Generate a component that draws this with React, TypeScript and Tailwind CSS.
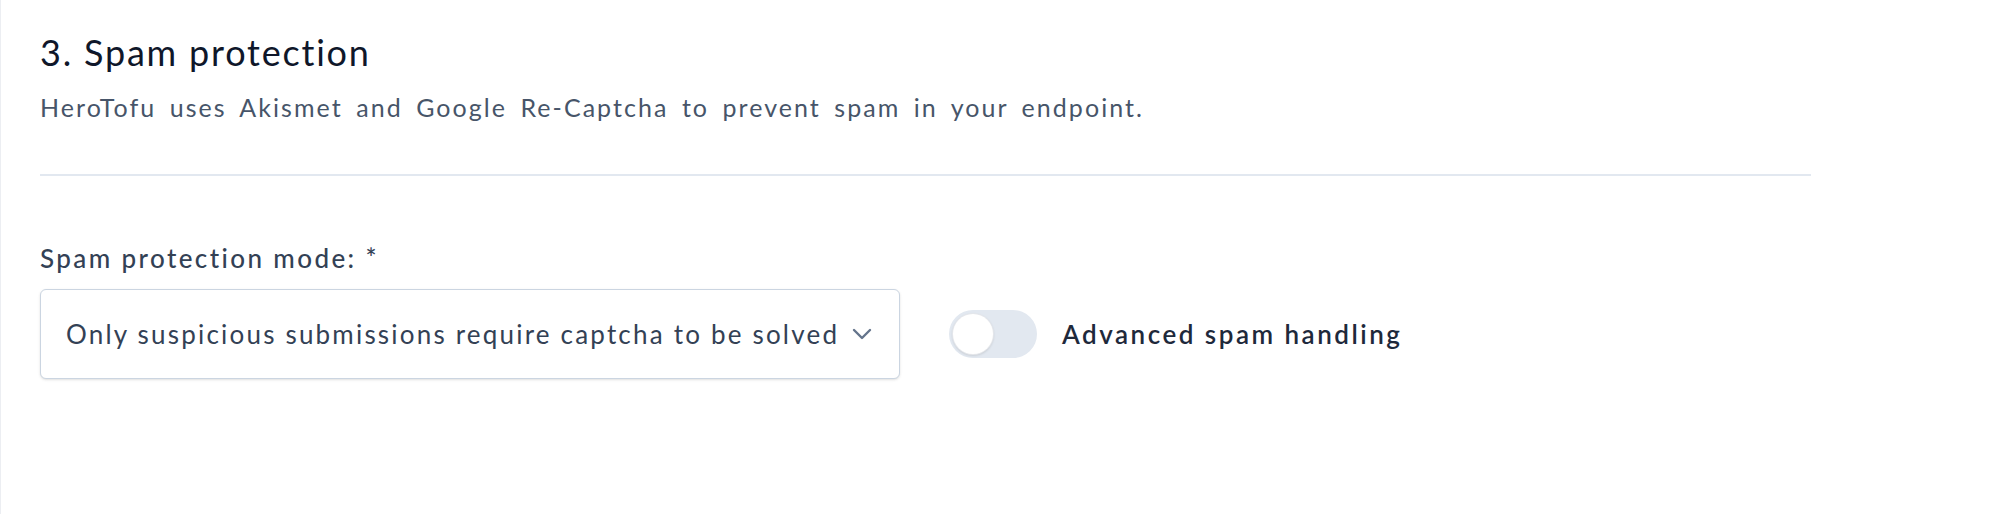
import React from "react";

export default function App() {
  return (
    <div
      className="min-h-[514px] w-[1996px] bg-white border-l border-[#eceef2]"
      style={{ fontFamily: "Lato, 'Open Sans', sans-serif" }}
    >
      <div className="pl-[39px] pt-[31px]">
        <h2 className="text-[36px] leading-[43px] font-normal tracking-[1.8px] text-[#0f172a]">
          3. Spam protection
        </h2>
        <p className="mt-[19px] text-[25px] leading-[29px] tracking-[2.05px] [word-spacing:5px] text-[#475569]">
          HeroTofu uses Akismet and Google Re-Captcha to prevent spam in your endpoint.
        </p>
        <div className="mt-[52px] h-[2px] w-[1771px] bg-[#e2e8f0]" />
        <div className="mt-[67px]">
          <label className="block text-[26px] leading-[31px] font-medium tracking-[2.4px] text-[#334155]">
            Spam protection mode: *
          </label>
          <div className="mt-[15px] flex items-center gap-[49px]">
            <div className="flex h-[90px] w-[860px] items-center justify-between rounded-[6px] border border-[#cbd5e1] bg-white pl-[25px] pr-[27px] shadow-sm">
              <span className="text-[26px] leading-[31px] tracking-[2.2px] text-[#334155]">
                Only suspicious submissions require captcha to be solved
              </span>
              <svg width="20" height="12" viewBox="0 0 20 12" fill="none">
                <path d="M2 2l8 8 8-8" stroke="#64748b" strokeWidth="2.4" strokeLinecap="round" strokeLinejoin="round" />
              </svg>
            </div>
            <div className="flex items-center gap-[25px]">
              <div className="relative h-[48px] w-[88px] rounded-full bg-[#e2e8f0]">
                <span className="absolute left-[4px] top-[4px] h-[40px] w-[40px] rounded-full bg-white shadow-[0_1px_3px_rgba(0,0,0,0.2)] ring-1 ring-[#e5e7eb]" />
              </div>
              <span className="text-[26px] leading-[31px] font-semibold tracking-[2.5px] text-[#1e293b]">
                Advanced spam handling
              </span>
            </div>
          </div>
        </div>
      </div>
    </div>
  );
}
